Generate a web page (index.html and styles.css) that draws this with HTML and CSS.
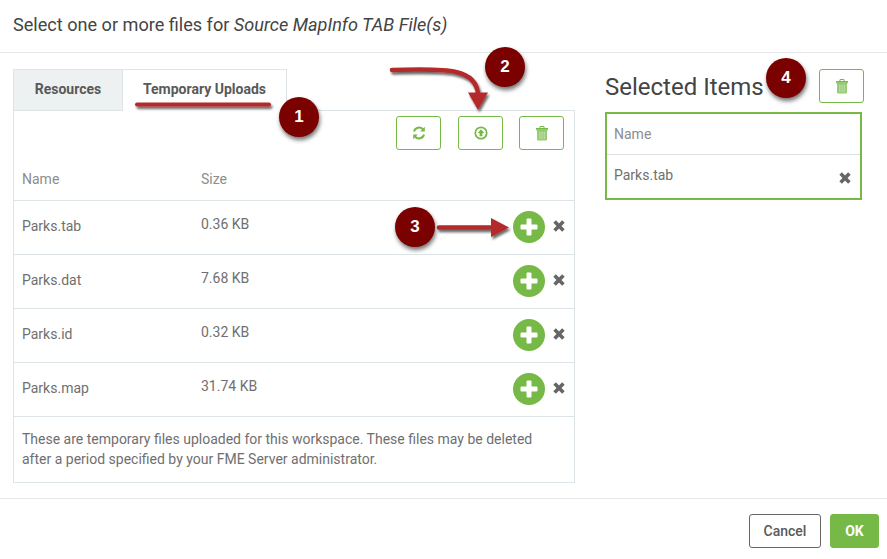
FILE: index.html
```html
<!DOCTYPE html>
<html lang="en">
<head>
<meta charset="utf-8">
<title>Select files</title>
<link rel="stylesheet" href="styles.css">
</head>
<body>
<svg class="defs" width="0" height="0" aria-hidden="true">
  <symbol id="i-trash" viewBox="0 0 14 16">
    <path d="M1 4.300h12v1H1zM5 1h4l.8 2H13v1H1V3h3.200zM5.600 2 5.300 3h3.400l-.3-1z" fill="currentColor"/>
    <path d="M2 5h10v9.500a1 1 0 0 1-1 1H3a1 1 0 0 1-1-1z" fill="currentColor" opacity=".75"/>
    <path d="M4.400 6.500h.9V14h-.9zM6.600 6.500h.9V14h-.9zM8.800 6.500h.9V14h-.9z" fill="#fff" opacity=".45"/>
  </symbol>
  <symbol id="i-x" viewBox="0 0 12 12">
    <path d="M1.600 1.600 10.400 10.400M10.400 1.600 1.600 10.400" fill="none" stroke="currentColor" stroke-width="3.600"/>
  </symbol>
  <symbol id="i-plus" viewBox="0 0 32 32">
    <circle cx="16" cy="16" r="16" fill="#76b947"/>
    <path d="M13.500 8.500a1 1 0 0 1 1-1h3a1 1 0 0 1 1 1v5h5a1 1 0 0 1 1 1v3a1 1 0 0 1-1 1h-5v5a1 1 0 0 1-1 1h-3a1 1 0 0 1-1-1v-5h-5a1 1 0 0 1-1-1v-3a1 1 0 0 1 1-1h5z" fill="#fff"/>
  </symbol>
</svg>

<header class="title-bar">
  <h1 class="title">Select one or more files for <em>Source MapInfo TAB File(s)</em></h1>
</header>

<main class="content">
  <section class="left">
    <div class="tabs">
      <div class="tab tab-off">Resources</div>
      <div class="tab tab-on">Temporary Uploads</div>
    </div>
    <div class="panel">
      <div class="toolbar">
        <button class="icon-btn" type="button">
          <svg class="ic-refresh" viewBox="0 0 14 14"><path d="M2 5.600A5.200 5.200 0 0 1 11 3.400" fill="none" stroke="currentColor" stroke-width="2"/><path d="M12.800.8v4.600H8.200z" fill="currentColor"/><path d="M12 8.400A5.200 5.200 0 0 1 3 10.600" fill="none" stroke="currentColor" stroke-width="2"/><path d="M1.200 13.200V8.600h4.600z" fill="currentColor"/></svg>
        </button>
        <button class="icon-btn" type="button">
          <svg class="ic-up" viewBox="0 0 14 14"><circle cx="7" cy="7" r="5.700" fill="none" stroke="currentColor" stroke-width="1.700"/><path d="M7 3.200 10.300 7H8.400v3.200H5.600V7H3.700z" fill="currentColor"/></svg>
        </button>
        <button class="icon-btn" type="button">
          <svg class="ic-trash"><use href="#i-trash"/></svg>
        </button>
      </div>
      <div class="row row-head">
        <span class="col-name">Name</span>
        <span class="col-size">Size</span>
      </div>
      <div class="row">
        <span class="col-name">Parks.tab</span><span class="col-size">0.36 KB</span>
        <svg class="ic-plus"><use href="#i-plus"/></svg><svg class="ic-x"><use href="#i-x"/></svg>
      </div>
      <div class="row">
        <span class="col-name">Parks.dat</span><span class="col-size">7.68 KB</span>
        <svg class="ic-plus"><use href="#i-plus"/></svg><svg class="ic-x"><use href="#i-x"/></svg>
      </div>
      <div class="row">
        <span class="col-name">Parks.id</span><span class="col-size">0.32 KB</span>
        <svg class="ic-plus"><use href="#i-plus"/></svg><svg class="ic-x"><use href="#i-x"/></svg>
      </div>
      <div class="row">
        <span class="col-name">Parks.map</span><span class="col-size">31.74 KB</span>
        <svg class="ic-plus"><use href="#i-plus"/></svg><svg class="ic-x"><use href="#i-x"/></svg>
      </div>
      <p class="note">These are temporary files uploaded for this workspace. These files may be deleted after a period specified by your FME Server administrator.</p>
    </div>
  </section>

  <aside class="right">
    <div class="right-head">
      <h2 class="selected-title">Selected Items</h2>
      <button class="icon-btn" type="button">
        <svg class="ic-trash"><use href="#i-trash"/></svg>
      </button>
    </div>
    <div class="selected-box">
      <div class="sel-name">Name</div>
      <div class="sel-row"><span>Parks.tab</span><svg class="ic-x"><use href="#i-x"/></svg></div>
    </div>
  </aside>
</main>

<footer class="footer">
  <button class="btn btn-cancel" type="button">Cancel</button>
  <button class="btn btn-ok" type="button">OK</button>
</footer>

<svg class="arrows" viewBox="0 0 887 559" aria-hidden="true">
  <defs>
    <filter id="sh" filterUnits="userSpaceOnUse" x="0" y="0" width="887" height="559"><feDropShadow dx="1.500" dy="2.500" stdDeviation="1.200" flood-color="#000" flood-opacity=".6"/></filter>
  </defs>
  <path filter="url(#sh)" d="M137 104.500H269" fill="none" stroke="#b42a2a" stroke-width="4" stroke-linecap="round"/>
  <g filter="url(#sh)">
    <path d="M392 70C425 69 445 69 456 72 469 75 477 82 478 94" fill="none" stroke="#b42a2a" stroke-width="4.500" stroke-linecap="round"/>
    <path d="M468 92.500H488L478 110z" fill="#b42a2a"/>
  </g>
  <g filter="url(#sh)">
    <path d="M439 227.500H492" fill="none" stroke="#b42a2a" stroke-width="4.500" stroke-linecap="round"/>
    <path d="M491 218 509 227.500 491 237z" fill="#b42a2a"/>
  </g>
</svg>
<span class="badge badge-1">1</span>
<span class="badge badge-2">2</span>
<span class="badge badge-3">3</span>
<span class="badge badge-4">4</span>
</body>
</html>
```

FILE: styles.css
```css
* { box-sizing: border-box; }
html, body { margin: 0; padding: 0; }
body {
  position: relative;
  width: 887px;
  height: 559px;
  overflow: hidden;
  background: #fff;
  font-family: Roboto, "Liberation Sans", sans-serif;
  color: #6f6f6f;
  font-size: 14px;
}
.defs { position: absolute; }

.title-bar {
  height: 53px;
  border-bottom: 1px solid #e5e8e8;
  padding: 14px 13px 0;
}
.title {
  margin: 0;
  font-size: 18.100px;
  font-weight: 400;
  line-height: 22px;
  color: #444;
}

.content {
  display: flex;
  height: 446px;
  padding: 16px 0 0 13px;
  border-bottom: 1px solid #e5e8e8;
}
.left { width: 562px; }
.right { width: 259px; margin-left: 30px; }

.tabs { display: flex; height: 42px; }
.tab {
  display: flex;
  align-items: center;
  justify-content: center;
  border: 1px solid #dde5e8;
  font-size: 14px;
  font-weight: 700;
  color: #595959;
  padding-bottom: 3px;
}
.tab-off {
  width: 109px;
  background: #edf1f2;
  border-right: 0;
}
.tab-on {
  width: 165px;
  background: #fff;
  border-bottom: 0;
  position: relative;
  z-index: 1;
  height: 42px;
}

.panel {
  height: 373px;
  margin-top: -1px;
  border: 1px solid #dde5e8;
  background: #fff;
}
.toolbar {
  display: flex;
  justify-content: flex-end;
  gap: 17px;
  height: 47px;
  padding: 5px 10px 0 0;
}
.toolbar .icon-btn:last-child { margin-left: -1px; }
.icon-btn {
  display: flex;
  align-items: center;
  justify-content: center;
  width: 45px;
  height: 34px;
  padding: 0;
  background: #fff;
  border: 1px solid #76b947;
  border-radius: 3px;
  color: #76b947;
}
.ic-refresh { width: 14px; height: 14px; }
.ic-up { width: 14px; height: 14px; }
.ic-trash { width: 14px; height: 16px; }

.row {
  display: flex;
  align-items: center;
  height: 54px;
  padding: 0 9px 1px 8px;
  border-bottom: 1px solid #dde5e8;
  color: #6f6f6f;
}
.row-head {
  height: 43px;
  padding-bottom: 0;
  color: #8d8d8d;
}
.col-name { width: 179px; position: relative; top: -1px; }
.col-size { flex: 1; position: relative; top: -3px; }
.row-head .col-name, .row-head .col-size { top: 0; }
.ic-plus { width: 32px; height: 32px; }
.ic-x { width: 12px; height: 12px; color: #666; margin-left: 8px; position: relative; top: -1px; }

.note {
  margin: 0;
  padding: 12px 25px 0 8px;
  font-size: 14px;
  line-height: 20px;
  color: #6f6f6f;
}

.right-head {
  display: flex;
  align-items: center;
  justify-content: space-between;
  height: 34px;
}
.selected-title {
  margin: 0;
  font-size: 24px;
  font-weight: 400;
  color: #444;
  position: relative;
  top: 1px;
}
.selected-box {
  width: 257px;
  height: 88px;
  margin-top: 9px;
  border: 2px solid #76b947;
}
.sel-name {
  display: flex;
  align-items: center;
  height: 41px;
  padding-left: 7px;
  border-bottom: 1px solid #dde0e2;
  color: #8d8d8d;
}
.sel-row {
  display: flex;
  align-items: center;
  justify-content: space-between;
  height: 43px;
  padding: 0 9px 4px 7px;
}
.sel-row .ic-x { position: relative; top: 3px; }

.footer {
  display: flex;
  justify-content: flex-end;
  gap: 9px;
  padding: 15px 8px 0 0;
}
.btn {
  height: 34px;
  padding: 0;
  border-radius: 3px;
  font-family: inherit;
  font-size: 14px;
  font-weight: 500;
}
.btn-cancel {
  width: 72px;
  background: #fff;
  border: 1px solid #666;
  color: #595959;
}
.btn-ok {
  width: 49px;
  background: #76b947;
  border: 1px solid #76b947;
  color: #fff;
  font-weight: 700;
}

.arrows {
  position: absolute;
  z-index: 2;
  left: 0;
  top: 0;
  width: 887px;
  height: 559px;
  pointer-events: none;
}
.badge {
  position: absolute;
  z-index: 3;
  width: 40px;
  height: 40px;
  border-radius: 50%;
  background: #7b0000;
  color: #fff;
  font-family: "Liberation Sans", sans-serif;
  font-size: 17px;
  font-weight: 700;
  line-height: 39px;
  text-align: center;
  box-shadow: 1px 3px 4px rgba(0, 0, 0, .55);
}
.badge-1 { left: 279px; top: 97px; }
.badge-2 { left: 485px; top: 47px; }
.badge-3 { left: 395px; top: 207px; }
.badge-4 { left: 766px; top: 58px; }
```
